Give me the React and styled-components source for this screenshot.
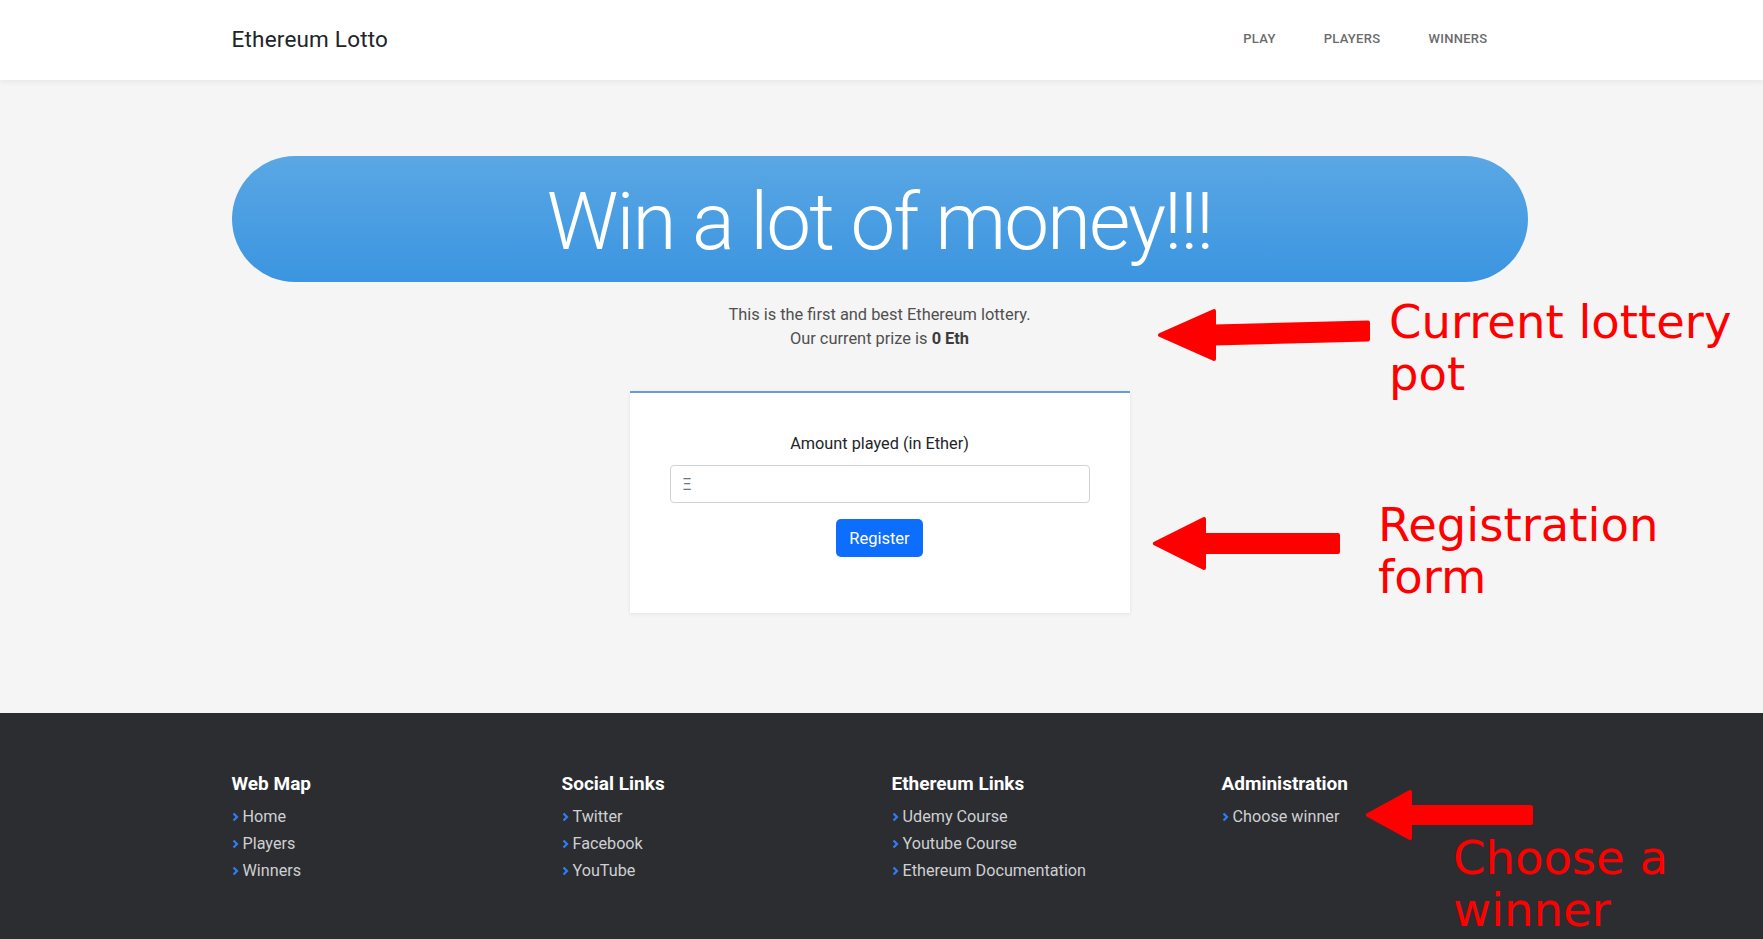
import React from "react";
import styled, { createGlobalStyle } from "styled-components";

const GlobalStyle = createGlobalStyle`
  body {
    margin: 0;
    background: #f5f5f5;
    font-family: Roboto, "Liberation Sans", sans-serif;
    color: #212529;
  }
  * { box-sizing: border-box; }
`;

const Page = styled.div`
  position: relative;
  min-height: 939px;
  overflow: hidden;
`;

const Container = styled.div`
  width: 1296px;
  margin-left: calc(50% - 650px);
  margin-right: auto;
`;

const NavBar = styled.header`
  height: 80px;
  background: #fff;
  box-shadow: 0 2px 6px rgba(0, 0, 0, 0.06);
`;

const NavInner = styled(Container)`
  height: 100%;
  display: flex;
  align-items: center;
  justify-content: space-between;
  padding-bottom: 3px;
`;

const Brand = styled.a`
  font-size: 22.5px;
  color: #212529;
  text-decoration: none;
  letter-spacing: 0.2px;
`;

const NavLinks = styled.nav`
  display: flex;
  gap: 48px;
  margin-right: 40px;
  padding-bottom: 1px;
`;

const NavLink = styled.a`
  font-size: 13px;
  font-weight: 500;
  text-transform: uppercase;
  color: #6b6b6b;
  text-decoration: none;
  letter-spacing: 0.3px;
`;

const Main = styled.main`
  padding: 76px 0 100px;
`;

const Hero = styled.div`
  height: 126px;
  border-radius: 63px;
  background: linear-gradient(180deg, #5aa7e4 0%, #3b95e0 100%);
  display: flex;
  align-items: center;
  justify-content: center;
  padding-top: 6px;
`;

const HeroTitle = styled.h1`
  margin: 0;
  font-size: 80px;
  font-weight: 300;
  color: #fff;
  line-height: 1.2;
  letter-spacing: -2px;
`;

const Lead = styled.p`
  margin: 21px 0 0;
  text-align: center;
  font-size: 16.4px;
  line-height: 24px;
  color: #505050;

  b { font-weight: 700; color: #3c3c3c; }
`;

const Card = styled.form`
  width: 500px;
  margin: 40px auto 0;
  background: #fff;
  border-top: 2px solid #6c9ad9;
  box-shadow: 0 1px 4px rgba(0, 0, 0, 0.08);
  padding: 39px 40px 56px;
  display: flex;
  flex-direction: column;
  align-items: center;
`;

const Label = styled.label`
  font-size: 16.3px;
  line-height: 24px;
  margin-bottom: 9px;
`;

const Input = styled.input`
  width: 100%;
  height: 38px;
  border: 1px solid #ced4da;
  border-radius: 4px;
  padding: 0 12px;
  font-size: 16px;
  font-family: inherit;
  &::placeholder { color: #6c757d; }
`;

const Button = styled.button`
  margin-top: 16px;
  height: 38px;
  padding: 0 13px;
  border: none;
  border-radius: 5px;
  background: #0d6efd;
  color: #fff;
  font-size: 16.5px;
  font-family: inherit;
`;

const Footer = styled.footer`
  background: #2b2d31;
  padding: 59px 0 56px;
`;

const FooterGrid = styled(Container)`
  display: grid;
  grid-template-columns: repeat(4, 1fr);
  column-gap: 24px;
`;

const ColTitle = styled.h5`
  margin: 0 0 7px;
  font-size: 19px;
  line-height: 24px;
  font-weight: 700;
  color: #fff;
`;

const LinkList = styled.ul`
  list-style: none;
  margin: 0;
  padding: 0;
`;

const LinkItem = styled.li`
  display: flex;
  align-items: center;
  gap: 4px;
  font-size: 16.2px;
  line-height: 27px;
  color: #cfd0d2;
`;

const Note = styled.div`
  position: absolute;
  left: ${(p) => p.$left}px;
  top: ${(p) => p.$top}px;
  font-family: "DejaVu Sans", sans-serif;
  font-size: 46.5px;
  line-height: 52px;
  color: #ff0000;
  white-space: nowrap;
`;

const ArrowSvg = styled.svg`
  position: absolute;
  left: ${(p) => p.$left}px;
  top: ${(p) => p.$top}px;
  overflow: visible;
`;

const Arrow = ({ left, top, width, headW, headH, shaft, tilt = 0 }) => {
  const cy = headH / 2;
  const s = shaft / 2;
  const pts = [
    [0, cy],
    [headW, 0],
    [headW, cy - s],
    [width, cy - s + tilt],
    [width, cy + s + tilt],
    [headW, cy + s],
    [headW, headH],
  ]
    .map((p) => p.join(","))
    .join(" ");
  return (
    <ArrowSvg $left={left} $top={top} width={width} height={headH}>
      <polygon points={pts} fill="#ff0000" stroke="#ff0000" strokeWidth="4" strokeLinejoin="round" />
    </ArrowSvg>
  );
};

const Chevron = () => (
  <svg width="7" height="10" viewBox="0 0 7 10">
    <polyline points="1.5,1.5 5,5 1.5,8.5" fill="none" stroke="#2f7df6" strokeWidth="2.2" />
  </svg>
);

const columns = [
  { title: "Web Map", links: ["Home", "Players", "Winners"] },
  { title: "Social Links", links: ["Twitter", "Facebook", "YouTube"] },
  { title: "Ethereum Links", links: ["Udemy Course", "Youtube Course", "Ethereum Documentation"] },
  { title: "Administration", links: ["Choose winner"] },
];

export default function App() {
  return (
    <Page>
      <GlobalStyle />
      <NavBar>
        <NavInner>
          <Brand href="#">Ethereum Lotto</Brand>
          <NavLinks>
            <NavLink href="#">Play</NavLink>
            <NavLink href="#">Players</NavLink>
            <NavLink href="#">Winners</NavLink>
          </NavLinks>
        </NavInner>
      </NavBar>

      <Main>
        <Container>
          <Hero>
            <HeroTitle>Win a lot of money!!!</HeroTitle>
          </Hero>
          <Lead>
            This is the first and best Ethereum lottery.
            <br />
            Our current prize is <b>0 Eth</b>
          </Lead>
          <Card onSubmit={(e) => e.preventDefault()}>
            <Label htmlFor="amount">Amount played (in Ether)</Label>
            <Input id="amount" placeholder="Ξ" />
            <Button type="submit">Register</Button>
          </Card>
        </Container>
      </Main>

      <Footer>
        <FooterGrid>
          {columns.map((col) => (
            <div key={col.title}>
              <ColTitle>{col.title}</ColTitle>
              <LinkList>
                {col.links.map((l) => (
                  <LinkItem key={l}>
                    <Chevron />
                    {l}
                  </LinkItem>
                ))}
              </LinkList>
            </div>
          ))}
        </FooterGrid>
      </Footer>

      <Arrow left={1160} top={311} width={208} headW={54} headH={48} shaft={17} tilt={-4} />
      <Note $left={1389} $top={296}>
        Current lottery
        <br />
        pot
      </Note>

      <Arrow left={1155} top={519} width={183} headW={49} headH={49} shaft={17} />
      <Note $left={1378} $top={499}>
        Registration
        <br />
        form
      </Note>

      <Arrow left={1368} top={792} width={163} headW={42} headH={46} shaft={16} />
      <Note $left={1453} $top={832}>
        Choose a
        <br />
        winner
      </Note>
    </Page>
  );
}
